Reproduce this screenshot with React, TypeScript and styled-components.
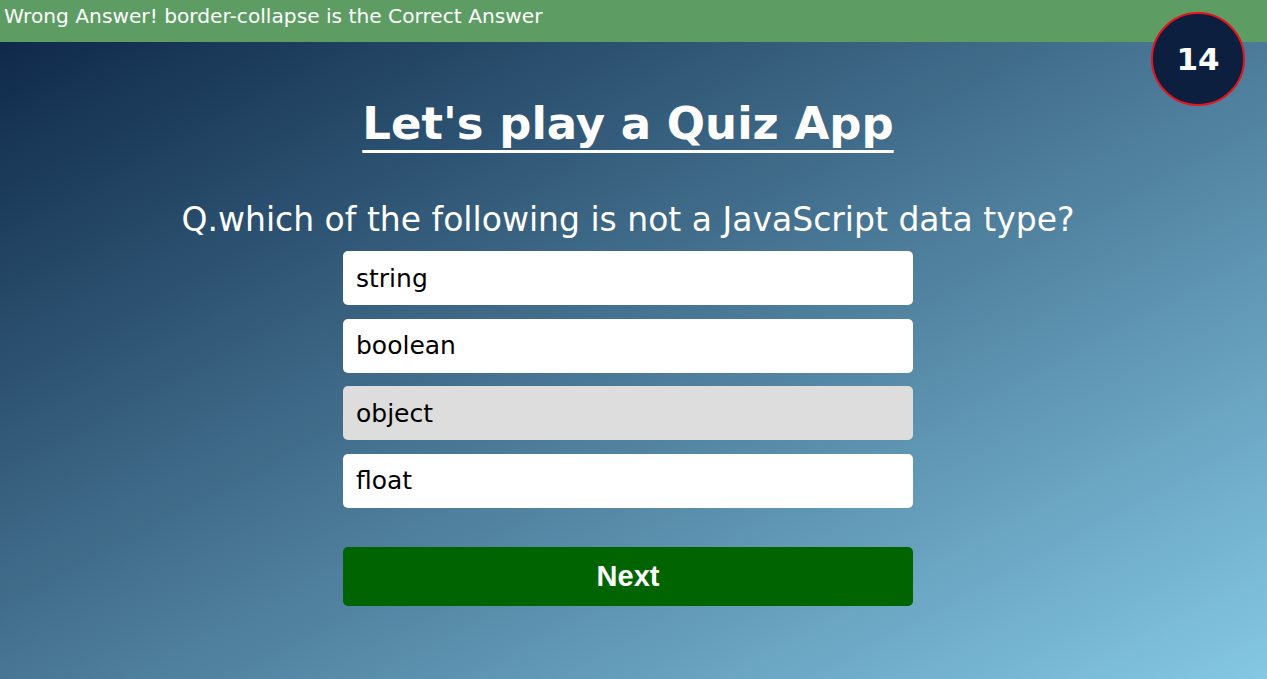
import React from "react";
import styled, { createGlobalStyle } from "styled-components";

const Global = createGlobalStyle`
  html, body { margin: 0; padding: 0; }
  body {
    width: 1267px;
    height: 679px;
    overflow: hidden;
    font-family: "DejaVu Sans", Verdana, sans-serif;
    background: linear-gradient(to bottom right, #0b2444 0%, #84c8e4 100%);
  }
`;

const Page = styled.div`
  position: relative;
  width: 1267px;
  height: 679px;
  display: flex;
  flex-direction: column;
`;

const Banner = styled.div`
  height: 42px;
  background: #5d9c63;
  color: #ffffff;
  font-size: 20.2px;
  line-height: 32px;
  padding-left: 4px;
`;

const Content = styled.main`
  width: 1256px;
  display: flex;
  flex-direction: column;
  align-items: center;
`;

const Timer = styled.div`
  position: absolute;
  top: 12px;
  left: 1151px;
  width: 90px;
  height: 90px;
  border: 2px solid #e8121b;
  border-radius: 50%;
  background: #0c1f3e;
  color: #ffffff;
  font-weight: bold;
  font-size: 31px;
  display: flex;
  align-items: center;
  justify-content: center;
`;

const Title = styled.h1`
  margin: 52px 0 0;
  font-size: 45px;
  font-weight: bold;
  color: #ffffff;
  text-decoration: underline;
  text-decoration-skip-ink: none;
  text-underline-offset: 11px;
  text-decoration-thickness: 3px;
  line-height: 60px;
`;

const Question = styled.h2`
  margin: 46px 0 0;
  font-size: 33px;
  font-weight: normal;
  color: #ffffff;
  line-height: 40px;
`;

const Options = styled.div`
  margin-top: 11px;
  width: 570px;
  display: flex;
  flex-direction: column;
  gap: 13.5px;
`;

const Option = styled.div<{ $selected?: boolean }>`
  height: 54px;
  box-sizing: border-box;
  padding: 0 13px;
  display: flex;
  align-items: center;
  background: ${(p) => (p.$selected ? "#dddddd" : "#ffffff")};
  border-radius: 5px;
  font-size: 25px;
  color: #000000;
`;

const NextButton = styled.button`
  margin-top: 39px;
  width: 570px;
  height: 59px;
  border: none;
  border-radius: 5px;
  background: #006400;
  color: #ffffff;
  font-family: "Liberation Sans", Arial, sans-serif;
  font-weight: bold;
  font-size: 29px;
`;

const options = ["string", "boolean", "object", "float"];

export default function App() {
  return (
    <>
      <Global />
      <Page>
        <Banner>Wrong Answer! border-collapse is the Correct Answer</Banner>
        <Timer>14</Timer>
        <Content>
          <Title>Let's play a Quiz App</Title>
          <Question>Q.which of the following is not a JavaScript data type?</Question>
          <Options>
            {options.map((o) => (
              <Option key={o} $selected={o === "object"}>
                {o}
              </Option>
            ))}
          </Options>
          <NextButton>Next</NextButton>
        </Content>
      </Page>
    </>
  );
}
